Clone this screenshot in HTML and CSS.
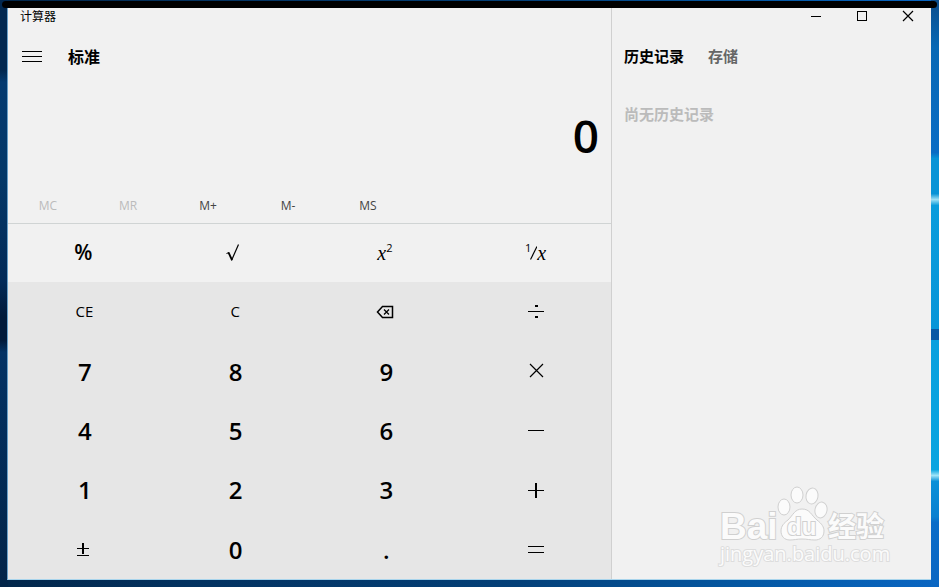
FILE: index.html
```
<!doctype html>

<html lang="zh-CN">
	<head>
		<meta charset="utf-8">
		<meta name="viewport" content="width=device-width, initial-scale=1">
		<title>计算器</title>
		<link rel="stylesheet" href="styles.css">
	</head>

	<body>
		<div class="top-strip"></div>

		<div class="window">
			<!-- Calculator: title, display, memory row and keys -->
			<main class="calculator">
				<h1 class="app-title">计算器</h1>

				<div class="mode-bar">
					<button class="menu-button" aria-label="菜单">
						<svg width="20" height="12" viewBox="0 0 20 12">
							<path d="M0 .5h20M0 5.5h20M0 10.5h20"/>
						</svg>
					</button>
					<h2 class="mode">标准</h2>
				</div>

				<output class="display">0</output>

				<div class="memory-row">
					<button disabled>MC</button>
					<button disabled>MR</button>
					<button>M+</button>
					<button>M-</button>
					<button>MS</button>
				</div>

				<div class="function-row">
					<button class="percent">%</button>
					<button aria-label="平方根">
						<svg width="18" height="18" viewBox="0 0 18 18" class="smooth">
							<path d="M1.500 9.500 4 8.500" stroke-width="1"/>
							<path d="M3.500 8.500 7 16" stroke-width="1.800"/>
							<path d="M6.500 16.500 13.500 .5" stroke-width="1.200"/>
						</svg>
					</button>
					<button class="formula"><i>x</i><sup>2</sup></button>
					<button class="formula">
						<sup>1</sup>
						<svg width="7" height="16" viewBox="0 0 7 16" class="smooth slash">
							<path d="M.5 14.500 7 1.500" stroke-width="1.200"/>
						</svg>
						<i>x</i>
					</button>
				</div>

				<div class="keypad">
					<button class="clear">CE</button>
					<button class="clear">C</button>
					<button aria-label="退格">
						<svg width="18" height="14" viewBox="0 0 18 14" class="smooth">
							<path d="M6.500 1.500H16.500V12.500H6.500L1.500 7z" stroke-width="1.500"/>
							<path d="M8 4.500 13 9.500M13 4.500 8 9.500" stroke-width="1.300"/>
						</svg>
					</button>
					<button aria-label="除">
						<svg width="16" height="16" viewBox="0 0 16 16">
							<path d="M0 7.500h16"/>
							<path d="M7 2h3M7 13h3" stroke-width="2"/>
						</svg>
					</button>

					<button class="digit">7</button>
					<button class="digit">8</button>
					<button class="digit">9</button>
					<button aria-label="乘">
						<svg width="16" height="16" viewBox="0 0 16 16" class="smooth">
							<path d="M2 1 15 14M15 1 2 14" stroke-width="1.200"/>
						</svg>
					</button>

					<button class="digit">4</button>
					<button class="digit">5</button>
					<button class="digit">6</button>
					<button aria-label="减">
						<svg width="16" height="16" viewBox="0 0 16 16">
							<path d="M0 8.500h16"/>
						</svg>
					</button>

					<button class="digit">1</button>
					<button class="digit">2</button>
					<button class="digit">3</button>
					<button aria-label="加">
						<svg width="16" height="16" viewBox="0 0 16 16">
							<path d="M0 8.500h16"/>
							<path d="M8 1v15" stroke-width="2"/>
						</svg>
					</button>

					<button aria-label="正负">
						<svg width="14" height="14" viewBox="0 0 14 14">
							<path d="M1 6.500h12M1 13.500h12"/>
							<path d="M7 1v11" stroke-width="2"/>
						</svg>
					</button>
					<button class="digit">0</button>
					<button class="digit">.</button>
					<button aria-label="等于">
						<svg width="16" height="16" viewBox="0 0 16 16">
							<path d="M0 5.500h16M0 11.500h16"/>
						</svg>
					</button>
				</div>
			</main>

			<!-- History and memory panel -->
			<aside class="side-panel">
				<div class="window-buttons">
					<button aria-label="最小化">
						<svg width="10" height="10" viewBox="0 0 10 10">
							<path d="M0 5.500h10"/>
						</svg>
					</button>
					<button aria-label="最大化">
						<svg width="10" height="10" viewBox="0 0 10 10">
							<path d="M.5 .5h9v9h-9z"/>
						</svg>
					</button>
					<button aria-label="关闭">
						<svg width="12" height="12" viewBox="0 0 12 12" class="smooth">
							<path d="M1 1 11 11M11 1 1 11" stroke-width="1.200"/>
						</svg>
					</button>
				</div>

				<div class="tabs">
					<button class="active">历史记录</button>
					<button>存储</button>
				</div>

				<p class="empty-note">尚无历史记录</p>
			</aside>
		</div>

		<!-- Watermark over the lower right corner -->
		<svg class="watermark" width="180" height="96" viewBox="0 0 180 96">
			<ellipse cx="69" cy="25" rx="6" ry="8"/>
			<ellipse cx="82" cy="13" rx="6" ry="8"/>
			<ellipse cx="97" cy="14" rx="6" ry="8" transform="rotate(10 97 14)"/>
			<ellipse cx="106" cy="28" rx="6" ry="8" transform="rotate(12 106 28)"/>
			<path d="M87 27c8 0 9 6 15 11 5 4 7 7 7 11 0 6-4 9-9 9-5 0-8-1-13-1s-8 1-12 1c-6 0-9-4-9-9s3-8 7-11c5-5 7-11 14-11z"/>
			<text x="5" y="57" class="brand">Bai</text>
			<text x="72" y="53" class="du">du</text>
			<text x="113" y="55" class="brand-cn">经验</text>
			<text x="5" y="79" class="site">jingyan.baidu.com</text>
		</svg>
	</body>
</html>
```
FILE: styles.css
```
/* Page setup */

* { box-sizing: border-box; }

body {
	margin: 0;
	min-height: 100vh;
	display: flex;
	flex-direction: column;
	position: relative;

	/* right edge, left edge, bottom edge of the wallpaper */
	background:
		linear-gradient(#0a4d8c 0, #0868b4 8%, #0a6cc4 26%, #0893d6 27%, #0893d6 33%, #a0e0f4 34%, #0a9cdc 35%, #0895d8 56%, #0a58a4 56%, #0a58a4 58%, #08a0de 58%, #08a4e0 80%, #a0e4f8 81%, #0a90d8 82%, #0a80d0 88%, #0a6cc8 89%, #0a66c2 100%) right / 8px 100% no-repeat,
		linear-gradient(#022850 0, #022850 12%, #043a70 14%, #043868 30%, #022a58 48%, #011a3a 54%, #011a3a 58%, #033264 60%, #022448 100%) left / 8px 100% no-repeat,
		linear-gradient(to right, #02264a, #033260 20%, #044078 55%, #0458a4 80%, #0a66c2);

	color: black;
	font-family: "Open Sans", "Noto Sans CJK SC", sans-serif;
}

h1, h2, p { margin: 0; }

button {
	display: flex;
	align-items: center;
	justify-content: center;
	min-width: 0;
	padding: 0;

	background: none;
	border: none;
	color: inherit;
	font: inherit;
}

svg {
	fill: none;
	stroke: black;
	shape-rendering: crispEdges;
}

svg.smooth { shape-rendering: auto; }

.top-strip {
	height: 7px;
	margin: 1px 2px 0;
	background: black;
	border-radius: 4px;
}

/* Window */

.window {
	flex: 1;
	display: grid;
	grid-template-columns: 1fr 320px;
	margin: 0 8px 7px 7px;
	background: #f1f1f1;
	border-left: 1px solid #6aa0c8;
	border-bottom: 1px solid #a8d4ec;
}

.calculator {
	display: flex;
	flex-direction: column;
}

.app-title {
	padding-left: 12px;
	font: 12px/16px "Noto Sans CJK SC", sans-serif;
}

.mode-bar {
	display: flex;
	align-items: center;
	height: 66px;
}

.menu-button {
	width: 48px;
	height: 48px;
}

.mode {
	margin-left: 12px;
	padding-bottom: 2px;
	font: bold 16px/24px "Noto Sans CJK SC", sans-serif;
}

.display {
	height: 92px;
	padding-right: 12px;
	font-size: 46px;
	font-weight: 600;
	line-height: 90px;
	text-align: right;
}

.memory-row {
	display: grid;
	grid-template-columns: repeat(5, 80px);
	height: 42px;
	padding-top: 6px;
	border-bottom: 1px solid #d0d4d4;
	color: #444;
	font-size: 12px;
}

.memory-row button:disabled { color: #bbb; }

.function-row, .keypad {
	display: grid;
	grid-template-columns: repeat(4, 1fr);
}

.function-row { height: 58px; }

.percent {
	padding-bottom: 2px;
	font-size: 21px;
	font-weight: 600;
}

.formula { font-size: 14px; }

.formula i { font: italic 20px/24px "Liberation Serif", serif; }

.formula sup {
	align-self: center;
	padding-bottom: 10px;
	font-size: 11px;
	line-height: 12px;
}

.slash { margin-left: -1px; }

.keypad {
	flex: 1;
	grid-auto-rows: 1fr;
	background: #e6e6e6;
}

.digit {
	padding-left: 3px;
	font-size: 24px;
	font-weight: 600;
}

.clear {
	padding: 0 0 2px 2px;
	font-size: 15px;
}

/* Side panel */

.side-panel {
	border-left: 1px solid #d0d0d0;
	font: bold 15px/24px "Noto Sans CJK SC", sans-serif;
}

.window-buttons {
	display: flex;
	justify-content: flex-end;
	height: 16px;
}

.window-buttons button { width: 46px; }

.tabs {
	display: flex;
	gap: 24px;
	height: 66px;
	padding: 0 0 2px 12px;
	color: #666;
}

.tabs .active { color: black; }

.empty-note {
	padding: 12px;
	color: #bbb;
}

/* Watermark */

.watermark {
	position: absolute;
	right: 44px;
	bottom: 9px;
	fill: #fbfbfb;
	stroke: #d0d0d0;
	stroke-width: 1px;
	shape-rendering: auto;
}

.watermark text { paint-order: stroke; stroke-width: 2px; }

.brand { font: bold 37px "Liberation Sans", sans-serif; }

.du { font: bold 24px "Liberation Sans", sans-serif; }

.brand-cn { font: bold 28px "Noto Sans CJK SC", sans-serif; }

.site {
	stroke: #ddd;
	font: 20px "Open Sans", sans-serif;
}
```
